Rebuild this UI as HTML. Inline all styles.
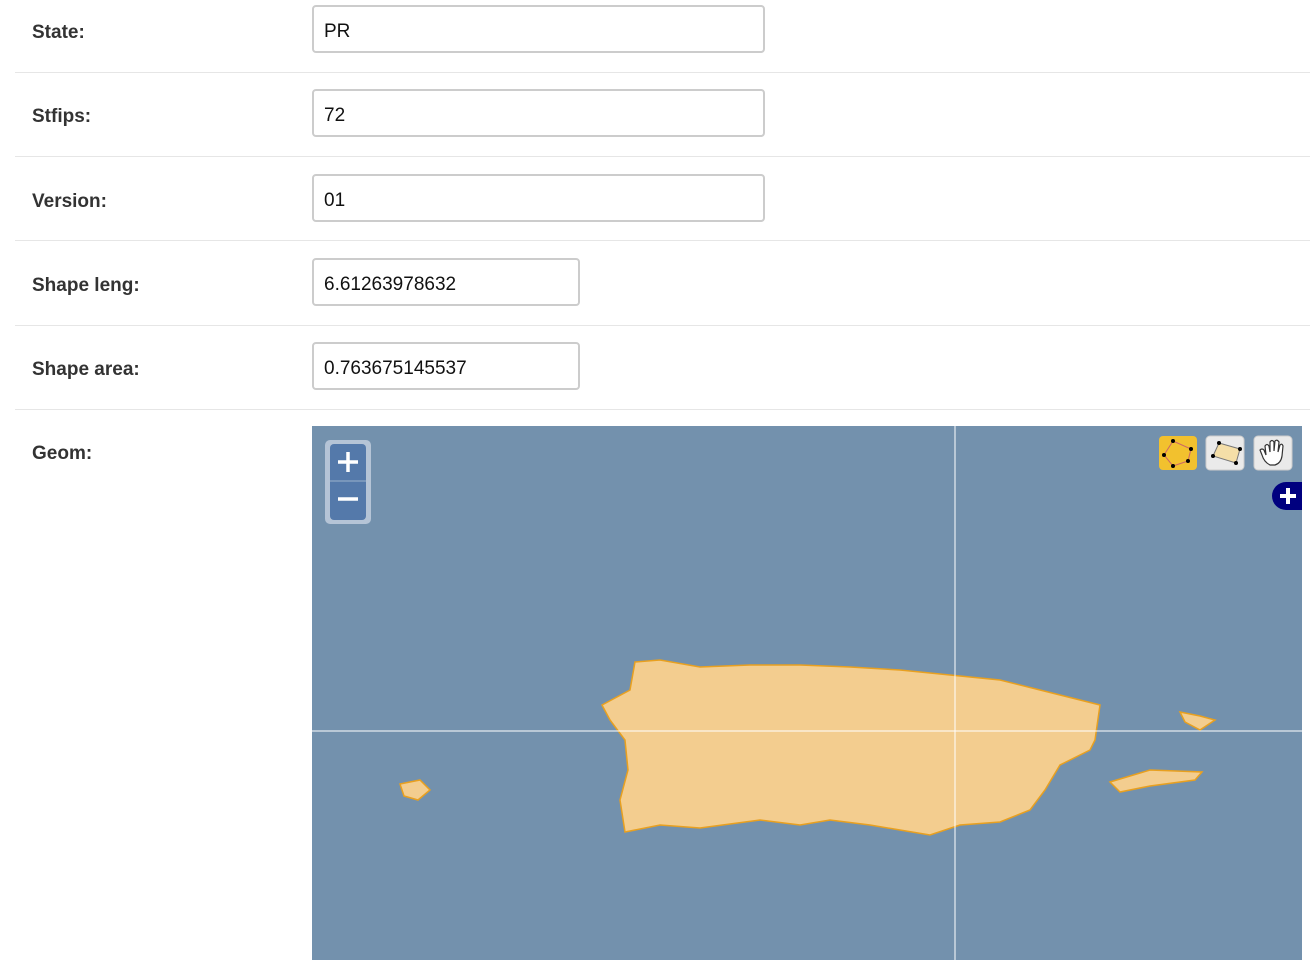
<!DOCTYPE html>
<html><head><style>
body{margin:0;width:1310px;height:960px;overflow:hidden;background:#fff;font-family:"Liberation Sans",sans-serif;position:relative}
.row{position:absolute;left:15px;width:1295px;border-bottom:1px solid #e6e6e6}
.lbl{position:absolute;left:32px;font-size:19px;font-weight:bold;color:#333}
.inp{position:absolute;left:312px;height:44px;border:2px solid #ccc;border-radius:4px;font-size:19px;color:#111;line-height:50px;padding-left:10px;box-sizing:content-box}
</style></head><body>
<div class="row" style="top:0;height:72px"></div>
<div class="row" style="top:72px;height:84px"></div>
<div class="row" style="top:156px;height:84px"></div>
<div class="row" style="top:240px;height:85px"></div>
<div class="row" style="top:325px;height:84px"></div>
<div class="lbl" style="top:22px">State:</div>
<div class="lbl" style="top:106px">Stfips:</div>
<div class="lbl" style="top:191px">Version:</div>
<div class="lbl" style="top:275px">Shape leng:</div>
<div class="lbl" style="top:359px">Shape area:</div>
<div class="lbl" style="top:443px">Geom:</div>
<div class="inp" style="top:5px;width:439px">PR</div>
<div class="inp" style="top:89px;width:439px">72</div>
<div class="inp" style="top:174px;width:439px">01</div>
<div class="inp" style="top:258px;width:254px">6.61263978632</div>
<div class="inp" style="top:342px;width:254px">0.763675145537</div>
<svg style="position:absolute;left:312px;top:426px" width="990" height="534" viewBox="312 426 990 534">
<rect x="312" y="426" width="990" height="534" fill="#7391ad"/>
<g fill="#f3cd8f" stroke="#e8a020" stroke-width="1.5">
<path d="M602,705 L630,690 L635,662 L660,660 L700,667 L750,665 L800,665 L850,667 L900,670 L950,675 L1000,680 L1040,690 L1080,700 L1100,705 L1095,740 L1090,750 L1060,765 L1045,790 L1030,810 L1000,822 L960,825 L930,835 L900,830 L870,825 L830,820 L800,825 L760,820 L700,828 L660,825 L625,832 L620,800 L628,770 L625,740 L610,720 Z"/>
<path d="M1110,782 L1150,770 L1202,772 L1195,780 L1150,786 L1120,792 Z"/>
<path d="M1180,712 L1200,716 L1215,720 L1200,730 L1185,722 Z"/>
<path d="M400,784 L420,780 L430,790 L418,800 L404,796 Z"/>
</g>
<line x1="955" y1="426" x2="955" y2="960" stroke="#fff" stroke-width="1"/>
<line x1="312" y1="731" x2="1302" y2="731" stroke="#fff" stroke-width="1"/>
<rect x="325" y="440" width="46" height="84" rx="5" fill="#b5c4d6"/>
<rect x="330" y="444" width="36" height="76" rx="4" fill="#5479aa"/>
<line x1="330" y1="481" x2="366" y2="481" stroke="#9db2cc"/>
<path d="M348,452v20M338,462h20M338,499h20" stroke="#fff" stroke-width="3.5"/>
<rect x="1159" y="436" width="38" height="34" rx="4" fill="#f2c12e"/>
<path d="M1173,441 L1191,449 L1188,461 L1173,466 L1164,455 Z" fill="none" stroke="#c66" stroke-width="1"/>
<g fill="#000"><circle cx="1173" cy="441" r="2"/><circle cx="1191" cy="449" r="2"/><circle cx="1188" cy="461" r="2"/><circle cx="1173" cy="466" r="2"/><circle cx="1164" cy="455" r="2"/></g>
<rect x="1206" y="436" width="38" height="34" rx="4" fill="#eaeaea" stroke="#ccc"/>
<path d="M1219,443 L1240,449 L1236,463 L1213,456 Z" fill="#f5dfa8" stroke="#777"/>
<g fill="#000"><circle cx="1219" cy="443" r="2"/><circle cx="1240" cy="449" r="2"/><circle cx="1236" cy="463" r="2"/><circle cx="1213" cy="456" r="2"/></g>
<rect x="1254" y="436" width="38" height="34" rx="4" fill="#eaeaea" stroke="#ccc"/>
<path d="M1266,455 L1265,446 Q1267,443 1269,446 L1270,452 L1270,442 Q1272,439 1274,442 L1274,451 L1275,441 Q1277,439 1279,442 L1278,452 L1280,445 Q1282,443 1283,446 L1282,456 Q1281,463 1275,465 L1270,465 Q1264,462 1262,455 L1260,450 Q1262,448 1264,450 Z" fill="#fff" stroke="#333" stroke-width="1.2"/>
<path d="M1302,482 h-16 a14,14 0 0 0 0,28 h16 Z" fill="#00007f"/>
<path d="M1288,488v16M1280,496h16" stroke="#fff" stroke-width="4"/>
</svg>
</body></html>
